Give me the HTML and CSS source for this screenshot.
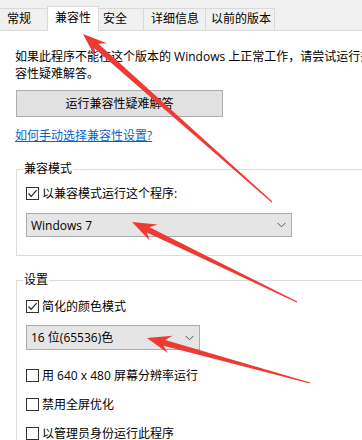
FILE: index.html
```
<!DOCTYPE html>
<html lang="zh-CN">
<head>
<meta charset="utf-8">
<title>属性 - 兼容性</title>
<link rel="stylesheet" href="styles.css">
</head>
<body>
<div class="page">
  <div class="tabs">
    <div class="tab t-general">常规</div>
    <div class="tab t-compat active">兼容性</div>
    <div class="tab t-security">安全</div>
    <div class="tab t-details">详细信息</div>
    <div class="tab t-prev">以前的版本</div>
  </div>
  <div class="content">
    <p class="intro">如果此程序不能在这个版本的 Windows 上正常工作，请尝试运行兼<br>容性疑难解答。</p>
    <div class="btn">运行兼容性疑难解答</div>
    <a class="link" href="#">如何手动选择兼容性设置?</a>

    <fieldset class="group g-mode">
      <legend>兼容模式</legend>
      <div class="check r-first">
        <span class="box checked"><svg width="11" height="11" viewBox="0 0 11 11"><path d="M1.5 5.5 L4.2 8.3 L9.6 2.2" fill="none" stroke="#222" stroke-width="1.2"/></svg></span>
        <span>以兼容模式运行这个程序:</span>
      </div>
      <div class="select s-wide">
        <span>Windows 7</span>
        <svg width="9" height="6" viewBox="0 0 9 6"><path d="M0.5 0.8 L4.5 4.8 L8.5 0.8" fill="none" stroke="#555" stroke-width="1"/></svg>
      </div>
    </fieldset>

    <fieldset class="group g-settings">
      <legend>设置</legend>
      <div class="check r-first">
        <span class="box checked"><svg width="11" height="11" viewBox="0 0 11 11"><path d="M1.5 5.5 L4.2 8.3 L9.6 2.2" fill="none" stroke="#222" stroke-width="1.2"/></svg></span>
        <span>简化的颜色模式</span>
      </div>
      <div class="select s-narrow">
        <span>16 位(65536)色</span>
        <svg width="9" height="6" viewBox="0 0 9 6"><path d="M0.5 0.8 L4.5 4.8 L8.5 0.8" fill="none" stroke="#555" stroke-width="1"/></svg>
      </div>
      <div class="check r-after-select">
        <span class="box"></span>
        <span>用 640 x 480 屏幕分辨率运行</span>
      </div>
      <div class="check r-next">
        <span class="box"></span>
        <span>禁用全屏优化</span>
      </div>
      <div class="check r-next">
        <span class="box"></span>
        <span>以管理员身份运行此程序</span>
      </div>
    </fieldset>
  </div>

  <svg class="arrows" width="362" height="440" viewBox="0 0 362 440">
    <polygon fill="#ee3a35" points="83,34 106.9,43.2 98.4,43.8 272.4,201.6 271.6,202.4 94.4,48.2 94.9,56.6"/>
    <polygon fill="#ee3a35" points="132,222 157.5,224.4 149.5,227.15 297.3,301.5 296.7,302.5 146.9,232.55 149.7,240.6"/>
    <polygon fill="#ee3a35" points="147,338 172.5,335.7 165.15,339.9 310.2,382.4 309.8,383.6 163.55,345.68 167.7,353.1"/>
  </svg>
</div>
</body>
</html>
```

FILE: styles.css
```
html, body {
  margin: 0;
  padding: 0;
  overflow: hidden;
  background: #fff;
}

.page {
  position: relative;
  width: 362px;
  height: 440px;
  overflow: hidden;
  font-family: "Open Sans", "Noto Sans CJK SC", sans-serif;
  font-size: 12px;
  line-height: 17px;
  color: #000;
}

.tabs {
  display: flex;
  align-items: flex-end;
  height: 31px;
  box-sizing: border-box;
  background: #f0f0f0;
  border-bottom: 1px solid #d9d9d9;
  width: 420px;
}

.tab {
  height: 22px;
  box-sizing: border-box;
  border: 1px solid #d9d9d9;
  border-bottom: none;
  line-height: 20px;
  margin-left: -1px;
  padding-left: 6px;
  white-space: nowrap;
  background: #f0f0f0;
}

.tab.active {
  position: relative;
  z-index: 1;
  height: 25px;
  margin-bottom: -1px;
  line-height: 22px;
  background: #fff;
}

.t-general { width: 49px; padding-left: 7px; }
.t-compat { width: 52px; padding-left: 7px; }
.t-security { width: 46px; padding-left: 4px; }
.t-details { width: 63px; padding-left: 7px; }
.t-prev { width: 70px; padding-left: 5px; }

.content {
  padding: 17px 0 0 15px;
  width: 420px;
}

.intro {
  margin: 0;
  white-space: nowrap;
}

.btn {
  margin: 8px 0 0 1px;
  width: 207px;
  height: 27px;
  box-sizing: border-box;
  border: 1px solid #adadad;
  background: #e1e1e1;
  text-align: center;
  line-height: 25px;
}

.link {
  display: inline-block;
  margin-top: 10px;
  color: #0a64c8;
  text-decoration: underline;
}

.group {
  margin: 17px 0 0 1px;
  padding: 0 0 18px 9px;
  border: 1px solid #dcdcdc;
  width: 420px;
  box-sizing: border-box;
  min-inline-size: 0;
}

.g-settings {
  margin-top: 16px;
  padding-bottom: 40px;
}

.group legend {
  padding: 0 1px;
  margin-left: -3px;
  line-height: 16px;
}

.check {
  display: flex;
  align-items: center;
  gap: 3px;
  height: 17px;
  white-space: nowrap;
}

.g-mode .r-first { margin-top: 8px; }
.g-settings .r-first { margin-top: 10px; }
.r-after-select { margin-top: 17px; }
.r-next { margin-top: 12px; }

.box {
  width: 13px;
  height: 13px;
  box-sizing: border-box;
  border: 1px solid #333;
  background: #fff;
  display: flex;
  align-items: center;
  justify-content: center;
}

.select {
  display: flex;
  align-items: center;
  justify-content: space-between;
  box-sizing: border-box;
  border: 1px solid #acacac;
  background: #e5e5e5;
  padding: 0 5px 0 4px;
  white-space: nowrap;
}

.s-wide {
  margin-top: 11px;
  width: 266px;
  height: 24px;
}

.s-narrow {
  margin-top: 10px;
  width: 174px;
  height: 25px;
}

.arrows {
  position: absolute;
  left: 0;
  top: 0;
  pointer-events: none;
}
```
